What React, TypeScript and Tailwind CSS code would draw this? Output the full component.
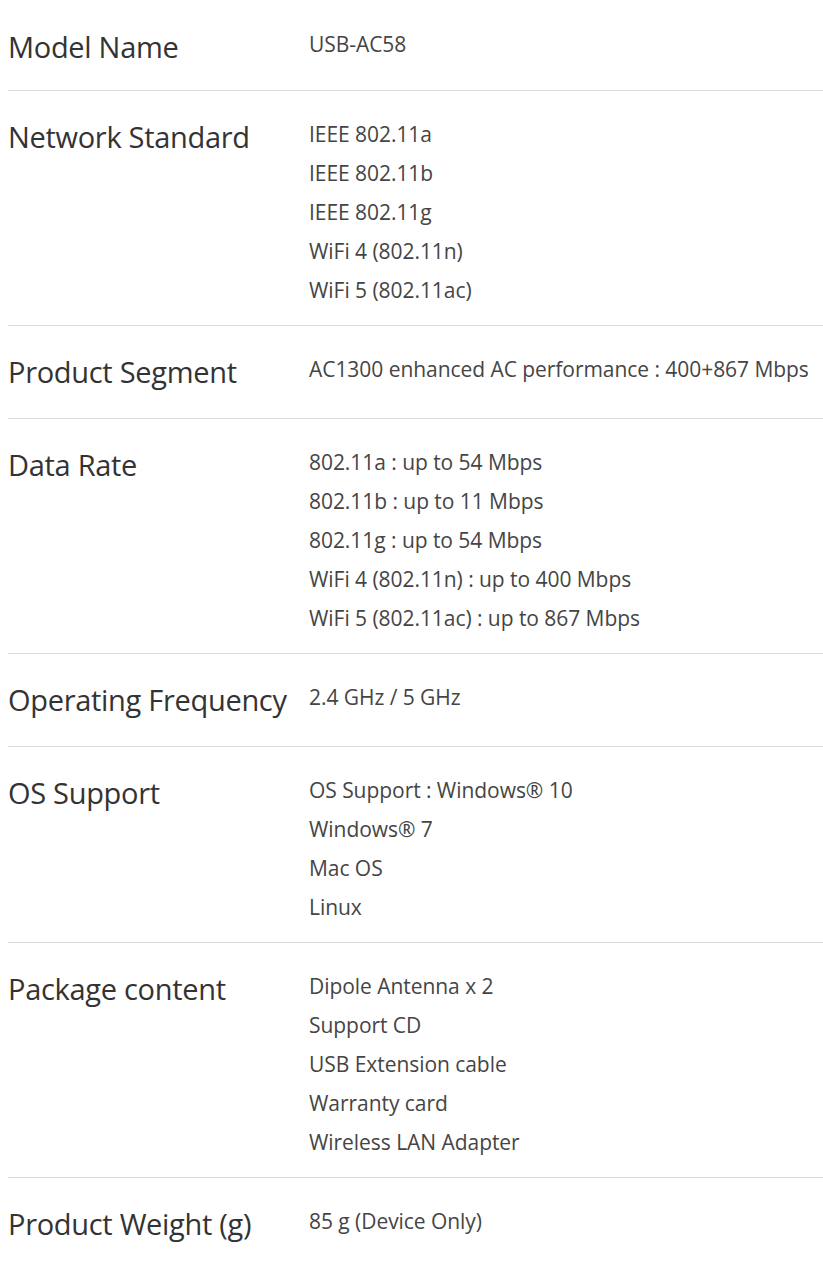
import React from "react";

const specs: { label: string; values: string[] }[] = [
  { label: "Model Name", values: ["USB-AC58"] },
  {
    label: "Network Standard",
    values: [
      "IEEE 802.11a",
      "IEEE 802.11b",
      "IEEE 802.11g",
      "WiFi 4 (802.11n)",
      "WiFi 5 (802.11ac)",
    ],
  },
  {
    label: "Product Segment",
    values: ["AC1300 enhanced AC performance : 400+867 Mbps"],
  },
  {
    label: "Data Rate",
    values: [
      "802.11a : up to 54 Mbps",
      "802.11b : up to 11 Mbps",
      "802.11g : up to 54 Mbps",
      "WiFi 4 (802.11n) : up to 400 Mbps",
      "WiFi 5 (802.11ac) : up to 867 Mbps",
    ],
  },
  { label: "Operating Frequency", values: ["2.4 GHz / 5 GHz"] },
  {
    label: "OS Support",
    values: ["OS Support : Windows® 10", "Windows® 7", "Mac OS", "Linux"],
  },
  {
    label: "Package content",
    values: [
      "Dipole Antenna x 2",
      "Support CD",
      "USB Extension cable",
      "Warranty card",
      "Wireless LAN Adapter",
    ],
  },
  { label: "Product Weight (g)", values: ["85 g (Device Only)"] },
];

const SpecRow = ({ label, values }: { label: string; values: string[] }) => {
  return (
    <div className="flex items-start pt-[15px] pb-[15px] first:pb-[12px] border-b border-[#dcdcdc] last:border-b-0">
      <div className="w-[301px] shrink-0 text-[29px] leading-[62px] text-[#333] tracking-[-0.3px]">
        {label}
      </div>
      <div className="pt-[9px] text-[21px] leading-[39px] text-[#454545] tracking-[-0.05px]">
        {values.map((v) => (
          <div key={v}>{v}</div>
        ))}
      </div>
    </div>
  );
};

export default function App() {
  return (
    <div className="min-h-screen bg-white pl-2 pt-px font-['Open_Sans',sans-serif]">
      {specs.map((s) => (
        <SpecRow key={s.label} label={s.label} values={s.values} />
      ))}
    </div>
  );
}
